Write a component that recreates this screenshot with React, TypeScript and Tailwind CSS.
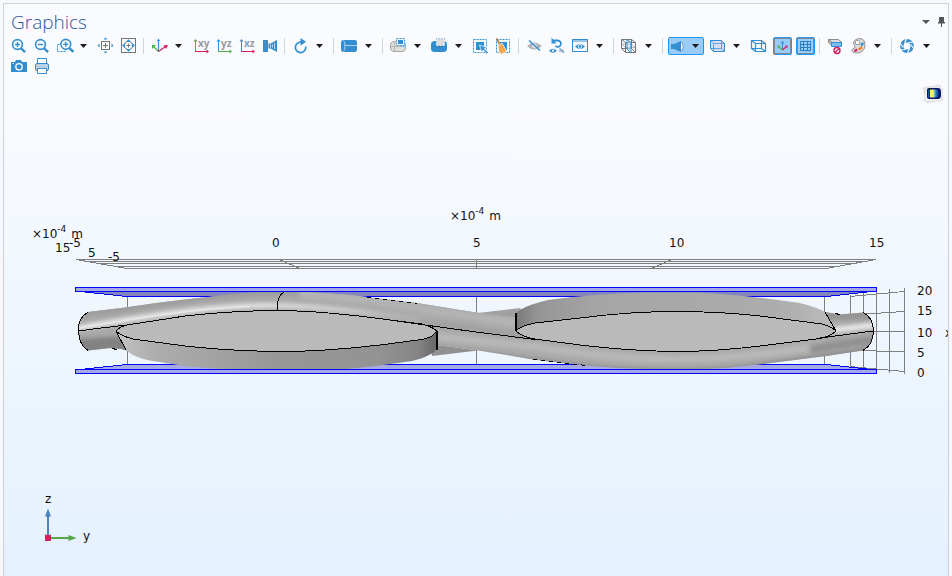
import type { ReactNode } from 'react'

const BLUE = '#338fd1'
const GRAY = '#767676'
const PINK = '#d81b60'
const GREEN = '#4caf50'

function Icon({ children }: { children: ReactNode }) {
  return (
    <svg viewBox="0 0 19 20" className="h-5 w-[19px] shrink-0" fill="none" aria-hidden="true">
      {children}
    </svg>
  )
}

function Caret() {
  return (
    <svg viewBox="0 0 7 4" className="h-1 w-[7px]" aria-hidden="true">
      <path d="M0 0h7L3.5 4z" fill="#1c1c1c" />
    </svg>
  )
}

function ToolButton({ label, children }: { label: string; children: ReactNode }) {
  return (
    <button type="button" aria-label={label} className="flex h-5 w-[23px] items-center justify-center">
      <Icon>{children}</Icon>
    </button>
  )
}

function MenuButton({ label }: { label: string }) {
  return (
    <button type="button" aria-label={label} className="flex h-5 w-[18px] items-center pl-1">
      <Caret />
    </button>
  )
}

function Divider() {
  return <div className="mr-1 ml-[3px] h-4 w-px self-center bg-[#d2d3d8]" />
}

function ToggleButton({ label, children }: { label: string; children: ReactNode }) {
  return (
    <button
      type="button"
      aria-label={label}
      aria-pressed="true"
      className="my-px mr-px ml-[3px] flex h-[18px] w-[19px] items-center justify-center rounded-xs border border-[#2196f3] bg-[#99ccf8]"
    >
      <svg viewBox="0 0 17 16" className="h-4 w-[17px]" fill="none" aria-hidden="true">
        <rect x="0.5" y="0.5" width="16" height="15" stroke="#808a94" />
        {children}
      </svg>
    </button>
  )
}

function Lens({ cx, cy, plus }: { cx: number; cy: number; plus?: boolean }) {
  return (
    <g stroke={BLUE}>
      <circle cx={cx} cy={cy} r="4.9" strokeWidth="1.6" fill="#fafbff" />
      <path d={`M${cx + 3.6} ${cy + 3.8}l4 3.8`} strokeWidth="2.4" />
      <path d={`M${cx - 2.5} ${cy}h5`} strokeWidth="1.4" />
      {plus && <path d={`M${cx} ${cy - 2.5}v5`} strokeWidth="1.4" />}
    </g>
  )
}

function PlaneView({ name, up, side }: { name: string; up: string; side: string }) {
  return (
    <ToolButton label={`Go to ${name} view`}>
      <path d="M4.5 4v12" stroke={up} />
      <path d="M2.5 5.5l2-2.5 2 2.5z" fill={up} />
      <path d="M4 15.5h12" stroke={side} />
      <path d="M15.5 13.5l2.5 2-2.5 2z" fill={side} />
      <text x="7" y="11" fontSize="10" fontWeight="700" fill="#9a9ca2" className="font-['Open_Sans',sans-serif]">
        {name}
      </text>
    </ToolButton>
  )
}

function Toolbar() {
  return (
    <div role="toolbar" aria-label="Graphics toolbar" className="flex flex-wrap pl-[3px]">
      <ToolButton label="Zoom in">
        <Lens cx={8.5} cy={8.5} plus />
      </ToolButton>
      <ToolButton label="Zoom out">
        <Lens cx={8.5} cy={8.5} />
      </ToolButton>
      <ToolButton label="Zoom box">
        <rect x="2.5" y="8.5" width="8" height="7" stroke={BLUE} strokeDasharray="2 1" />
        <Lens cx={10.8} cy={8.3} plus />
      </ToolButton>
      <MenuButton label="Zoom options" />
      <ToolButton label="Zoom extents">
        <rect x="5.5" y="5.5" width="8" height="8" stroke={GRAY} />
        <path d="M7 9.5h5M9.5 7v5" stroke={GRAY} />
        <path d="M9.5 1.5l2 2h-4zM9.5 17.5l2-2h-4zM1.5 9.5l2-2v4zM17.5 9.5l-2-2v4z" fill={BLUE} />
      </ToolButton>
      <ToolButton label="Zoom to selection">
        <rect x="2.5" y="2.5" width="14" height="14" stroke={GRAY} />
        <path d="M6.500 7.500v-1h1M11.500 6.500h1v1M12.500 11.500v1h-1M7.500 12.500h-1v-1" stroke={GRAY} />
        <path d="M7.500 9.500h4M9.500 7.500v4" stroke={GRAY} />
        <path d="M9.500 3.200l2.700 2.800H6.800zM9.500 15.800l2.700-2.800H6.800zM3.200 9.500L6 6.800v5.400zM15.800 9.500L13 6.800v5.400z" fill={BLUE} />
      </ToolButton>
      <Divider />

      <ToolButton label="Default view">
        <path d="M8.5 15.5V4" stroke={BLUE} strokeWidth="1.2" />
        <path d="M8.5 2.5l1.7 2.5H6.8z" fill={BLUE} />
        <path d="M8.5 15.5L3.5 10.5" stroke={GREEN} strokeWidth="1.2" />
        <path d="M2 9h4l-4 4z" fill={GREEN} />
        <path d="M8.5 15.5l7-5" stroke={PINK} strokeWidth="1.2" />
        <path d="M18 9l-4.5.3 2.7 3.6z" fill={PINK} />
      </ToolButton>
      <MenuButton label="View options" />
      <PlaneView name="xy" up={GREEN} side={PINK} />
      <PlaneView name="yz" up={BLUE} side={GREEN} />
      <PlaneView name="xz" up={BLUE} side={PINK} />
      <ToolButton label="Rotate view">
        <path d="M3 4h5v12H3zM8.5 7.5h2v5h-2z" fill={BLUE} />
        <path d="M10.500 7.500L17 4v12l-6.500-3.500z" fill={BLUE} />
        <path d="M10.500 8.500v3M12.500 8.500v3M14.500 7v6" stroke="#d9ebf8" strokeWidth="0.8" />
      </ToolButton>
      <Divider />

      <ToolButton label="Reset rotation">
        <path d="M10 6.2a5.200 5.200 0 1 0 4.700 4.300" stroke={BLUE} strokeWidth="1.7" />
        <path d="M9.5 2l5.500 3.800-5.500 4z" fill={BLUE} />
      </ToolButton>
      <MenuButton label="Rotation options" />
      <Divider />

      <ToolButton label="Select objects">
        <path d="M3 4h12q2 0 2 3v6q0 3-2 3H3q-2 0-2-3V7q0-3 2-3z" fill={BLUE} />
        <path d="M3.5 4.5q1.500 1 1.500 5.500t-1.500 5.500M5 9.500h12" stroke="#a9cfec" />
      </ToolButton>
      <MenuButton label="Selection level" />
      <Divider />

      <ToolButton label="Click and hide">
        <rect x="1.5" y="5.5" width="15" height="10" rx="3.500" fill="#dfe0dc" stroke="#a5a6a3" />
        <path d="M2 10.500h14.500M5.500 6v9" stroke="#b5b6b2" />
        <rect x="7" y="2" width="9" height="8" fill="#fafbff" />
        <rect x="9" y="4" width="5" height="4" fill={BLUE} />
        <rect x="7.5" y="2.5" width="8" height="7" stroke={BLUE} strokeDasharray="2 1" />
      </ToolButton>
      <MenuButton label="Hide options" />
      <ToolButton label="Box select">
        <rect x="1" y="5" width="16" height="11" rx="3.5" fill={BLUE} />
        <path d="M2 10.500h14" stroke="#2f83c0" />
        <rect x="6.5" y="2.500" width="8" height="7" fill="#dcdcdc" stroke={BLUE} />
        <rect x="6.5" y="2.500" width="8" height="7" stroke="#fff" strokeDasharray="2 1" />
      </ToolButton>
      <MenuButton label="Box select options" />
      <ToolButton label="Select box">
        <rect x="2.5" y="3.5" width="13" height="13" stroke={BLUE} strokeDasharray="2 1" />
        <path d="M5 6h8v8H5z" fill={BLUE} />
        <path d="M8.5 9l7.500 2.500-2.600 1.400 4 3.600-1.600 1.500-3.700-4-1.300 2.500z" fill={BLUE} stroke="#fafbff" strokeWidth="0.7" />
      </ToolButton>
      <ToolButton label="Clear selection">
        <rect x="2.5" y="3.5" width="13" height="13" stroke={BLUE} strokeDasharray="2 1" />
        <path d="M6 6h7v8H6z" fill={BLUE} />
        <path d="M2.5 2.500l4.500 8" stroke="#a87945" strokeWidth="1.6" />
        <path d="M4 9.500l4-2.500 4.500 8-4.500 3.500-3-2z" fill="#f6b45f" stroke="#fafbff" strokeWidth="0.6" />
        <path d="M5.500 10.500l2.500 6M7.500 9.500l3 6" stroke="#d58a34" strokeWidth="0.7" />
      </ToolButton>
      <Divider />

      <ToolButton label="Hide selected">
        <path d="M2 10q7-7 15 0-8 7-15 0z" fill="#b1b2b7" />
        <circle cx="9.5" cy="10" r="2.5" fill="#e1e1e5" />
        <path d="M4 4.500l11 10" stroke={BLUE} strokeWidth="1.5" />
      </ToolButton>
      <ToolButton label="Reset hiding">
        <path d="M5.500 4.500h4a3.200 3.200 0 1 1-2 5.500" stroke={BLUE} strokeWidth="1.8" />
        <path d="M3.500 1.500v6h5z" fill={BLUE} />
        <path d="M1 14.700q4-4 8 0-4 4-8 0z" fill={BLUE} />
        <circle cx="5" cy="14.700" r="1.100" fill="#fff" />
        <path d="M10 14.700q3.500-3.500 7 0-3.500 3.500-7 0z" fill="#c6c7cb" />
        <path d="M11.500 12l4.500 5" stroke={BLUE} />
      </ToolButton>
      <ToolButton label="View hidden only">
        <rect x="1.5" y="3.5" width="15" height="12" stroke={BLUE} />
        <path d="M2 5h14" stroke={BLUE} />
        <path d="M4 10.500q5-5 10 0-5 5-10 0z" fill={BLUE} />
        <circle cx="9" cy="10.500" r="1.800" stroke="#fff" strokeWidth="0.8" />
      </ToolButton>
      <MenuButton label="Hidden options" />
      <Divider />

      <ToolButton label="Wireframe">
        <path d="M1.500 3.500h10l4 3v10H5.500l-4-4zM5.500 16.500v-10h10M1.500 3.500l4 3M11.500 3.500v9l4 4M1.500 12.500h10" stroke={GRAY} />
        <path d="M1.500 8h10l4 3.500H5.500z" stroke={GRAY} strokeOpacity=".5" />
        <path d="M7 3.500l4 3v10.500l-4-4z" fill="#b4dafa" fillOpacity=".6" stroke={BLUE} />
      </ToolButton>
      <MenuButton label="Grid plane options" />
      <Divider />

      <div className="my-px mr-0.5 ml-px flex h-[18px] w-9 items-center rounded-xs border border-[#2196f3] bg-[#99ccf8]">
        <button type="button" aria-label="Scene light" aria-pressed="true" className="flex h-4 w-[22px] items-center pl-0.5">
          <svg viewBox="0 0 16 16" className="size-4" fill="none" aria-hidden="true">
            <path d="M0 6h3l7-3v11l-7-3H0z" fill={BLUE} />
            <path d="M10 4q4 4.500 0 9z" fill="#fff" />
            <path d="M10.500 4q3.500 4.500 0 9" stroke="#5f9cc9" />
          </svg>
        </button>
        <button type="button" aria-label="Light options" className="flex h-4 w-3 items-center pl-px">
          <Caret />
        </button>
      </div>
      <ToolButton label="Transparency">
        <path d="M2.500 4.500h11l3 3v8h-11l-3-3z" fill="#d5ddf2" stroke={BLUE} />
        <path d="M2.500 4.500l3 3h11M5.500 7.500v8M13.500 4.500v8h-11M13.500 12.500l3 3" stroke={BLUE} strokeOpacity=".7" />
      </ToolButton>
      <MenuButton label="Transparency options" />
      <ToolButton label="Wireframe rendering">
        <path d="M2.500 4.500h10l4 3v8H6.500l-4-3zM2.500 4.500l4 3h10M6.500 7.500v8M12.500 4.500v8h-10M12.500 12.500l4 3" stroke={BLUE} strokeWidth="1.2" />
      </ToolButton>
      <ToggleButton label="Show axis orientation">
        <path d="M8.500 11.500V5" stroke={BLUE} />
        <path d="M8.500 2.500l1.800 3H6.700z" fill={BLUE} />
        <path d="M8.500 12L5 9" stroke={GREEN} strokeWidth="1.2" />
        <path d="M3.500 7.500h3l-3 3z" fill={GREEN} />
        <path d="M8.500 12l3.500-3" stroke={PINK} strokeWidth="1.2" />
        <path d="M13.500 7.500h-3l3 3z" fill={PINK} />
      </ToggleButton>
      <ToggleButton label="Show grid">
        <path d="M3.500 3.500h10v9h-10zM6.500 3v10M10.500 3v10M3.500 6.500h10M3.500 9.500h10" stroke="#2b7fc0" />
      </ToggleButton>
      <Divider />

      <ToolButton label="Clipping">
        <path d="M2.500 3.500h10l3.500 3H6z" fill="#dadbd9" stroke="#8b8c8c" />
        <path d="M2.500 3.500v3L6 9.500v-3z" fill="#bbb" stroke="#8b8c8c" />
        <path d="M5.500 6.500h10v4h-10z" fill="#7bbdee" stroke={BLUE} />
        <circle cx="11" cy="14.500" r="3" fill="#fff" stroke={PINK} strokeWidth="1.4" />
        <path d="M9 16.500l4-4" stroke={PINK} strokeWidth="1.2" />
      </ToolButton>
      <ToolButton label="Color theme">
        <path d="M10 2.500q6 0 6 6 0 8-8 8.500-5.500 0-5-3 .5-1.500 2.500-2 1.200-.8 0-2Q2.500 4 10 2.500z" fill="#dcdcda" stroke="#929292" />
        <rect x="6.500" y="4.500" width="4" height="4" rx="1" fill="#fff" stroke="#929292" />
        <path d="M11.500 7.500l3-1.500v3l-2.500 1.500z" fill={BLUE} />
        <path d="M9 12.500l4-2.500.5 2.500-3.500 2z" fill="#ef7d22" />
        <path d="M5 14l3-1.500.5 2.500-3 1z" fill={PINK} />
      </ToolButton>
      <MenuButton label="Color options" />
      <Divider />

      <ToolButton label="Image snapshot">
        <circle cx="9" cy="10" r="5.2" stroke={BLUE} strokeWidth="3.4" />
        <path d="M9 1.500l-2.500 6M16.500 6l-6.200.5M16.500 13.500l-3.800-5M9 18.500l2.500-6M1.500 14l6.200-.5M1.500 6.500l3.800 5" stroke="#fafbff" strokeWidth="1.2" />
      </ToolButton>
      <MenuButton label="Snapshot options" />
      <ToolButton label="Save snapshot">
        <path d="M2 6h4l1-2h5l1 2h5v10H2z" fill={BLUE} />
        <circle cx="10" cy="10.800" r="3.200" stroke="#fff" strokeWidth="1.3" />
        <path d="M3.500 7.500h1.500" stroke="#fff" />
      </ToolButton>
      <ToolButton label="Print">
        <path d="M5.500 2.500h9v6h-9z" fill="#fff" stroke={BLUE} />
        <rect x="3.500" y="7.500" width="13" height="7" rx="1.500" fill="#b9d2ec" stroke={BLUE} />
        <path d="M5.500 12.500h9v5h-9z" fill="#fff" stroke={BLUE} />
      </ToolButton>
    </div>
  )
}

interface Tick {
  x: number
  y: number
  value: string
}

const ticks: Tick[] = [
  { x: 55, y: 252, value: '15' },
  { x: 69, y: 247, value: '-5' },
  { x: 88, y: 257, value: '5' },
  { x: 108, y: 261, value: '-5' },
  { x: 272, y: 247, value: '0' },
  { x: 473, y: 247, value: '5' },
  { x: 669, y: 247, value: '10' },
  { x: 869, y: 247, value: '15' },
  { x: 917, y: 295, value: '20' },
  { x: 917, y: 315, value: '15' },
  { x: 917, y: 337, value: '10' },
  { x: 917, y: 357, value: '5' },
  { x: 917, y: 377, value: '0' },
  { x: 945, y: 337, value: 'x' },
  { x: 45, y: 503, value: 'z' },
  { x: 83, y: 540, value: 'y' }
]

function UnitLabel({ x, y }: { x: number; y: number }) {
  return (
    <text x={x} y={y}>
      ×10
      <tspan dy="-6" fontSize="9">
        -4
      </tspan>
      <tspan dy="6" dx="1">
        {' m'}
      </tspan>
    </text>
  )
}

const yarnPath =
  'M88 312L125 307.5Q168 301 208 297Q250 291.5 285 291.5Q330 292 367 297L417 303L476 312.500L520 318L560 330L836 331L825 312L840 314.5L863 312.5Q873 317 873.5 331Q873 345 863 350.5L826 356L763 364Q725 369 680 369.5Q620 369 587 365.5L567 363.500L533 359.500L507 355L475 350L437 345L280 340L150 345L128 351L121 349L110 348L88 350.5Q78 344 78.5 331Q79 317 88 312z'
const leftLens =
  'M116 331Q119 327 127 325L185 316Q235 310.500 280 310.500Q325 311 390 320L422 324Q433 327 436.500 331Q434 337 422 339.500L380 345Q325 351.500 280 351.500Q230 351 185 346L133 339Q121 336 116 331z'
const rightLens =
  'M516 331Q520 326 535 323L580 318Q630 311.500 676 311.500Q720 311.500 760 316L822 324Q832 327 836 331Q831 336 820 338.500L760 346Q715 351.500 676 351.500Q630 351 580 345L531 338.500Q520 335 516 331z'

function Plot() {
  return (
    <svg viewBox="4 76 944 500" className="block w-full" fill="none" role="img" aria-label="Woven yarn geometry">
      <defs>
        <clipPath id="yarn">
          <path d={yarnPath} />
        </clipPath>
        <linearGradient id="leftSide" x1="116" x2="437" y1="0" y2="0" gradientUnits="userSpaceOnUse">
          <stop offset="0" stopColor="#c4c4c4" />
          <stop offset=".12" stopColor="#adadad" />
          <stop offset=".5" stopColor="#979797" />
          <stop offset=".82" stopColor="#939393" />
          <stop offset=".94" stopColor="#858585" />
          <stop offset="1" stopColor="#666" />
        </linearGradient>
        <linearGradient id="rightSide" x1="515" x2="836" y1="0" y2="0" gradientUnits="userSpaceOnUse">
          <stop offset="0" stopColor="#777" />
          <stop offset=".07" stopColor="#959595" />
          <stop offset=".25" stopColor="#a5a5a5" />
          <stop offset=".8" stopColor="#acacac" />
          <stop offset="1" stopColor="#bbb" />
        </linearGradient>
        <linearGradient id="shine" x1="78" x2="440" y1="0" y2="0" gradientUnits="userSpaceOnUse">
          <stop offset="0" stopColor="#eee" />
          <stop offset=".5" stopColor="#e6e6e6" />
          <stop offset=".75" stopColor="#cfcfcf" />
          <stop offset="1" stopColor="#b8b8b8" stopOpacity="0" />
        </linearGradient>
        <filter id="soft" x="-10%" y="-50%" width="120%" height="200%">
          <feGaussianBlur stdDeviation="2" />
        </filter>
      </defs>

      {/* grid */}
      <g stroke="#7f7f7f" shapeRendering="crispEdges">
        <path d="M76 259.500H876M88 261.500H864M100 263.500H852M115 266.500H838M127 268.500H826" />
        <path d="M76 259.500L127 268.500M876 259.500L826 268.500M279 259.500L300 268.500M476.500 259V269M672 259.500L651 268.500" />
        <path d="M127.500 296V365M476.500 296V365M824.500 296V365M850.500 295V367M863.500 293V369M876.500 291V372M889.500 289V373M904.500 288V374" />
        <path d="M850 296.500L904 291.500M850 315L904 311.500M850 331.500H904M850 350L904 352M850 366.500L904 371.500" />
      </g>

      {/* inner faces of the two plates */}
      <g shapeRendering="crispEdges">
        <path d="M80 291.500L127 296.500H826L872 291.500z" fill="#8585bd" />
        <path d="M80 369.500L127 364.500H826L872 369.500z" fill="#a6a9e2" />
        <path d="M80 291.500L127 296.500H826L872 291.500M80 369.500L127 364.500H826L872 369.500" stroke="#0000ff" />
      </g>

      {/* hidden yarn */}
      <path d="M478 313L520 308L530 320L500 320z" fill="#a0a0a0" />
      <path d="M430 344L478 350.500L432 356z" fill="#909090" />

      {/* long yarn */}
      <path d={yarnPath} fill="#a9a9a9" />
      <g clipPath="url(#yarn)">
        <g filter="url(#soft)">
          <path d="M75 313L125 307Q230 289 285 291Q340 291 420 304L520 321" stroke="#9c9c9c" strokeWidth="9" />
          <path d="M70 348L135 343" stroke="#828282" strokeWidth="16" />
          <path d="M300 294L367 299L440 311L535 325" stroke="#b4b4b4" strokeWidth="9" />
          <path d="M430 336L530 346Q620 360 680 359Q750 358 826 345" stroke="#b9b9b9" strokeWidth="7" />
          <path d="M430 350L570 368Q680 380 763 368L885 350" stroke="#8b8b8b" strokeWidth="10" />
          <path d="M420 322L476 329L535 337" stroke="#999" strokeWidth="3" />
          <path d="M810 349L885 338" stroke="#909090" strokeWidth="8" />
          <path d="M815 315L885 314" stroke="#949494" strokeWidth="10" />
        </g>
        <g filter="url(#soft)">
          <path d="M66 330L125 320Q210 306 265 305.500Q320 305 440 322" stroke="url(#shine)" strokeWidth="5" />
          <path d="M815 332L890 323.500" stroke="#f2f2f2" strokeWidth="5" />
        </g>
        <path d="M76 328.500L125 320.500Q200 308 250 306.500" stroke="#f0f0f0" strokeOpacity=".6" strokeWidth="1.5" />
      </g>

      {/* cross yarns */}
      <path
        d="M116 331L126 350Q135 359 160 362Q185 367 230 369.500H340Q380 366 412 361Q432 356 436.500 349V331L280 345z"
        fill="url(#leftSide)"
      />
      <path
        d="M515.500 331V314Q522 306 548 300Q600 293 646 292.500H700Q755 296 800 303Q819 308 825 312L836 331L680 318z"
        fill="url(#rightSide)"
      />
      <path d={leftLens} fill="#bababa" />
      <path d={rightLens} fill="#bababa" />

      {/* edges */}
      <g stroke="#000" shapeRendering="crispEdges">
        <path d={leftLens} />
        <path d={rightLens} />
        <path d="M78.500 331Q100 328 127 325L185 316M390 320L436 326.500L476 332L535 339.500M820 338L873 331" />
        <path d="M88 312.500Q78 317 78.500 331Q79 345 88 350.500M863 312.500Q873 317 873.500 331Q873 345 863 350.500" />
        <path d="M277.500 311Q276 297 284 292M116 331L126 350M825 312L836 331" />
        <path d="M367 297.500L392 300.500L417 303.500M533 359.500L567 363.500L587 365.500" strokeDasharray="4 4" />
        <path d="M436.500 331V350M515.500 313V331" strokeWidth="2" />
        <path d="M112 348.500L117 349.500M835 313.500L840 314.500" />
      </g>

      {/* outer faces of the plates */}
      <g fill="#a5a7e6" stroke="#0000ff" shapeRendering="crispEdges">
        <rect x="75.5" y="287.5" width="801" height="4" />
        <rect x="75.5" y="369.5" width="801" height="4" />
      </g>

      {/* axis triad */}
      <path d="M48 538V515" stroke="#4a83bd" strokeWidth="2" />
      <path d="M48 508.500l3 8h-6z" fill="#4a83bd" />
      <path d="M48 538H70" stroke="#55a745" strokeWidth="2" />
      <path d="M76.500 538l-8-3v6z" fill="#55a745" />
      <path d="M45.500 534.500l5 6M50.500 534.500l-5 6" stroke="#222" />
      <rect x="45" y="535" width="6" height="6" rx="1" fill="#dc1c5c" />

      <g fill="#111" fontSize="12" className="font-['DejaVu_Sans',sans-serif]">
        <UnitLabel x={32} y={238} />
        <UnitLabel x={450} y={220} />
        {ticks.map((tick, index) => (
          <text key={index} x={tick.x} y={tick.y}>
            {tick.value}
          </text>
        ))}
      </g>
    </svg>
  )
}

function ProductLogo() {
  return (
    <svg viewBox="0 0 22 20" className="absolute top-2 right-1 h-5 w-[22px]" aria-hidden="true">
      <defs>
        <linearGradient id="logo">
          <stop offset="0" stopColor="#fff04a" />
          <stop offset=".35" stopColor="#f3ee88" />
          <stop offset=".6" stopColor="#2b9ad4" />
          <stop offset="1" stopColor="#071a80" />
        </linearGradient>
      </defs>
      <path d="M1 4l17-3 3 14-16 4z" fill="#ecebec" stroke="#d6d5d8" strokeWidth="0.7" />
      <path d="M2 17L4 3l17 2-2 12z" fill="#f5f4f5" stroke="#dad9db" strokeWidth="0.7" />
      <path d="M5 6q0-2 2-2h9q3 0 3 4v3q0 4-3 4H7q-2 0-2-2z" fill="#06176e" />
      <path d="M8 5.500h6q3 0 3 4t-3 4H8z" fill="url(#logo)" />
      <path d="M6 6h1.500v7.500H6z" fill="#1d55b5" />
    </svg>
  )
}

export default function App() {
  return (
    <div className="min-h-screen overflow-hidden bg-[#f7f8fc] px-[3px] pt-[3px] font-['Open_Sans',sans-serif]">
      <section className="min-h-screen border border-b-0 border-[#d0d2da] bg-[#fafbff]">
        <header className="flex h-8 items-start justify-between pr-[3px] pl-[7px]">
          <h1 className="pt-1 text-[19px] leading-7 font-light text-[#2c5796]">Graphics</h1>
          <div className="flex items-center gap-2 pt-3">
            <button type="button" aria-label="Panel menu" className="flex h-3 items-center">
              <svg viewBox="0 0 8 4" className="h-1 w-2" aria-hidden="true">
                <path d="M0 0h8L4 4z" fill="#55565a" />
              </svg>
            </button>
            <button type="button" aria-label="Pin panel" className="flex h-3 items-center">
              <svg viewBox="0 0 7 10" className="h-2.5 w-[7px]" aria-hidden="true">
                <path d="M1 0h5v5h1v1.500H4V10H3V6.500H0V5h1z" fill="#55565a" />
              </svg>
            </button>
          </div>
        </header>
        <Toolbar />
        <main className="relative bg-linear-to-b from-[#fafbff] to-[#e4f1fe]">
          <ProductLogo />
          <Plot />
        </main>
      </section>
    </div>
  )
}
